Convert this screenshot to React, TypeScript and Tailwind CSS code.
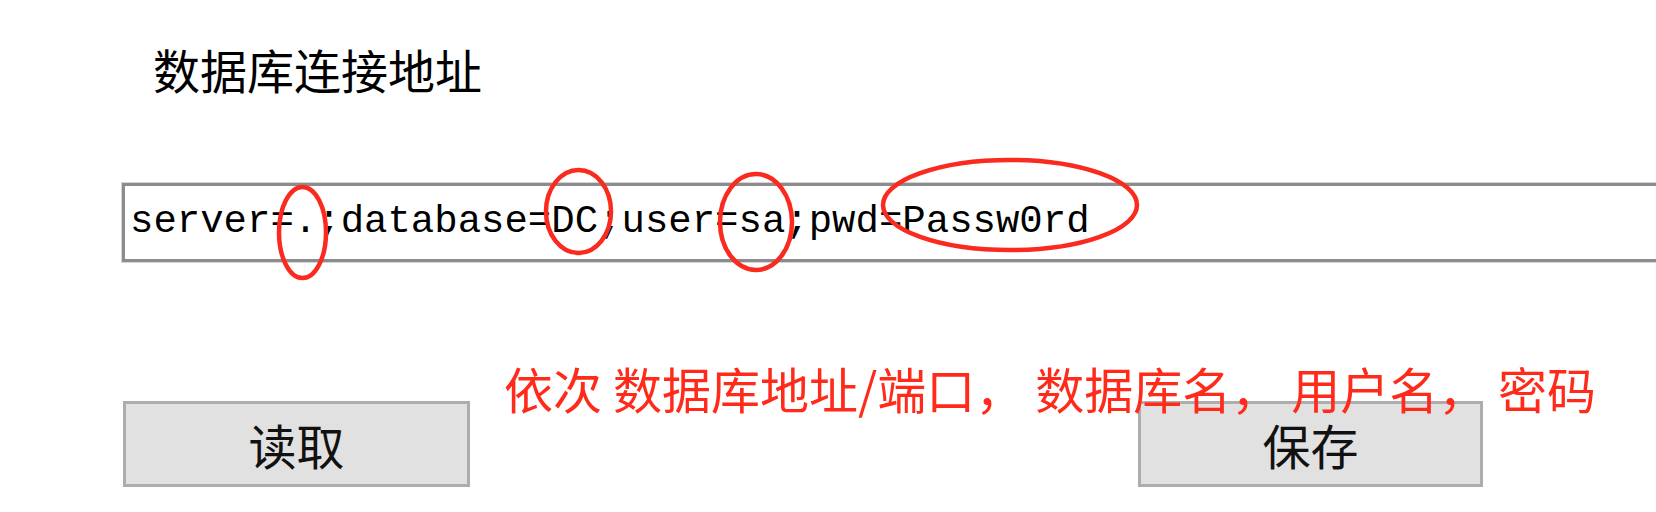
import React from "react";

const marks = [
  { cx: 302.5, cy: 232.5, rx: 23.5, ry: 45.5 },
  { cx: 578.5, cy: 211.5, rx: 32.5, ry: 41.5 },
  { cx: 756, cy: 222, rx: 36, ry: 48 },
  { cx: 1010, cy: 205, rx: 127, ry: 45 },
];

export default function App() {
  return (
    <div className="relative w-[1656px] h-[512px] overflow-hidden bg-white text-black font-['Noto_Sans_CJK_SC',sans-serif]">
      <div className="pt-[45px] pl-[153px] text-[47px] leading-none">数据库连接地址</div>

      <div className="mt-[91px] ml-[122px] w-[1600px] h-[79px] border-[3px] border-[#8c8c8c] shadow-[0_0_0_1px_#d4d4d4] flex items-center pl-[5px] bg-white">
        <span className="font-['Liberation_Mono',monospace] text-[39px] leading-none whitespace-nowrap">
          server=.;database=DC;user=sa;pwd=Passw0rd
        </span>
      </div>

      <div className="mt-[139px] flex">
        <button className="ml-[123px] w-[347px] h-[86px] border-[3px] border-[#adadad] bg-[#e1e1e1] flex items-center justify-center text-[48px] leading-none text-[#111]">
          读取
        </button>
        <button className="ml-[668px] w-[345px] h-[86px] border-[3px] border-[#adadad] bg-[#e1e1e1] flex items-center justify-center text-[48px] leading-none text-[#111]">
          保存
        </button>
      </div>

      {/* 标注 */}
      <svg className="absolute left-0 top-0 pointer-events-none" width={1656} height={512}>
        {marks.map((m, i) => (
          <ellipse key={i} cx={m.cx} cy={m.cy} rx={m.rx} ry={m.ry} fill="none" stroke="#fa2a1e" strokeWidth={4.5} />
        ))}
      </svg>
      <div className="absolute left-[504px] top-[363px] text-[49px] leading-none whitespace-pre text-[#ff2a1a]">
        依次 数据库地址/端口， 数据库名， 用户名， 密码
      </div>
    </div>
  );
}
